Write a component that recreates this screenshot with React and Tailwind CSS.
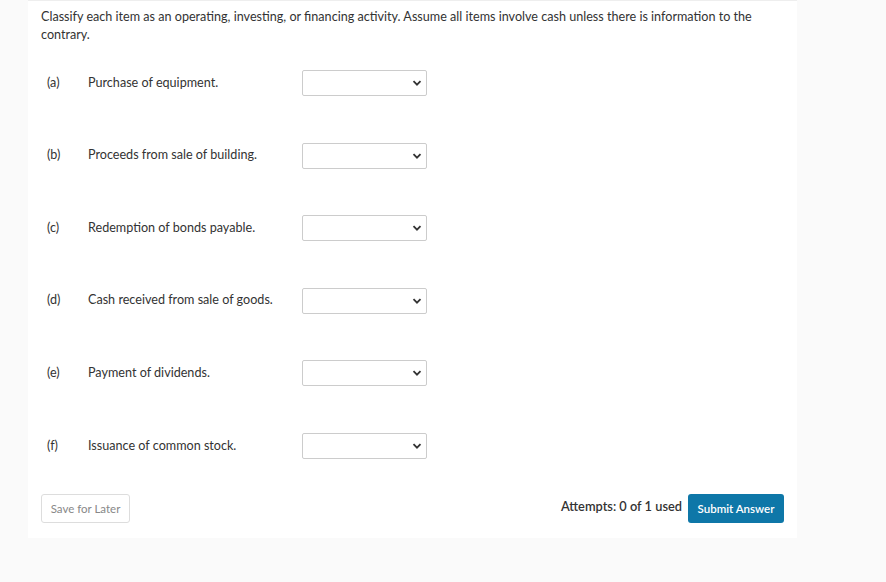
import React from 'react';

const items = [
  { key: '(a)', text: 'Purchase of equipment.' },
  { key: '(b)', text: 'Proceeds from sale of building.' },
  { key: '(c)', text: 'Redemption of bonds payable.' },
  { key: '(d)', text: 'Cash received from sale of goods.' },
  { key: '(e)', text: 'Payment of dividends.' },
  { key: '(f)', text: 'Issuance of common stock.' },
];

const Chevron = () => (
  <svg width="10" height="10" viewBox="0 0 10 10" className="text-[#333]">
    <path d="M1.5 3.2 L5 6.7 L8.5 3.2" fill="none" stroke="currentColor" strokeWidth="1.8" />
  </svg>
);

const App = () => {
  return (
    <div className="min-h-[582px] w-full bg-[#fafafa] text-[#333]" style={{ fontFamily: 'Lato, "Open Sans", sans-serif' }}>
      <div className="ml-[28px] w-[769px] bg-white border-t border-[#eee] px-[13px] pt-[7px] pb-[15px]">
        <p className="text-[12.6px] leading-[18px] pr-[20px]">
          Classify each item as an operating, investing, or financing activity. Assume all items involve cash unless there is information to the contrary.
        </p>

        <div className="mt-[26px] flex flex-col gap-[46.6px]">
          {items.map((item) => (
            <div key={item.key} className="flex items-center h-[26px] text-[12.6px]">
              <span className="w-[47px] pl-[6px]">{item.key}</span>
              <span className="w-[214px]">{item.text}</span>
              <div className="w-[125px] h-[26px] border border-[#ccc] rounded-[2px] bg-white flex items-center justify-end pr-[4px]">
                <Chevron />
              </div>
            </div>
          ))}
        </div>

        <div className="mt-[35px] flex items-center justify-between">
          <button className="h-[29px] w-[89px] border border-[#ddd] rounded-[3px] text-[11.5px] text-[#888] bg-white">
            Save for Later
          </button>
          <div className="flex items-center gap-[6px]">
            <span className="text-[12.8px] font-semibold text-[#333] -mt-[3px]">Attempts: 0 of 1 used</span>
            <button className="h-[29px] w-[96px] rounded-[3px] bg-[#0e77a8] text-white text-[11.5px] font-semibold">
              Submit Answer
            </button>
          </div>
        </div>
      </div>
    </div>
  );
};

export default App;
